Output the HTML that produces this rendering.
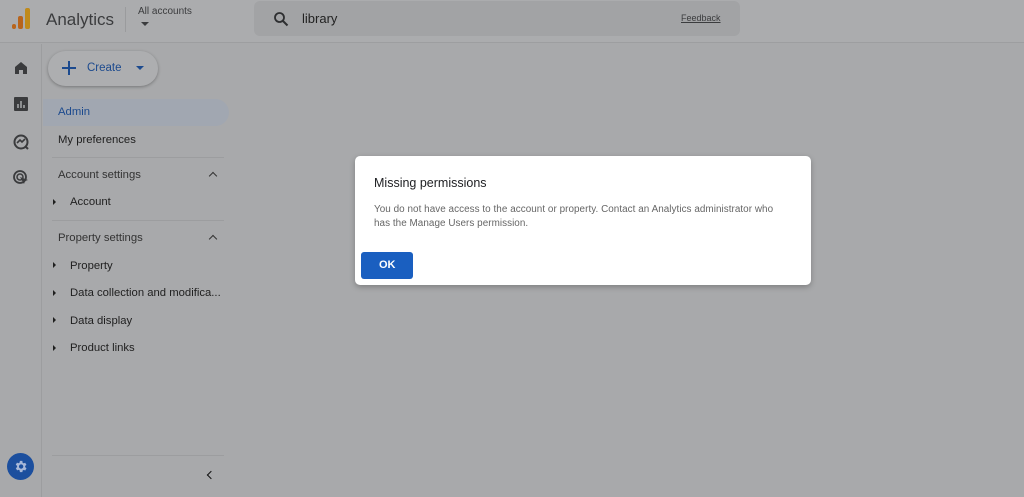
<!DOCTYPE html>
<html><head><meta charset="utf-8"><style>
*{margin:0;padding:0;box-sizing:border-box}
body{width:1024px;height:497px;overflow:hidden;background:#a8a9ab;font-family:"Liberation Sans",Arial,sans-serif;position:relative;color:#1f1f1f}
.hdr{position:absolute;left:0;top:0;width:1024px;height:43px;background:#abacae;border-bottom:1px solid #9d9ea0}
.rail{position:absolute;left:0;top:44px;width:42px;height:453px;border-right:1px solid #9c9d9f}
.t{position:absolute;white-space:nowrap}
.nav{font-size:11.3px;color:#1f1f1f}
.sec{font-size:11.3px;color:#333}
.tri{position:absolute;width:0;height:0;border-top:3px solid transparent;border-bottom:3px solid transparent;border-left:3px solid #1f1f1f}
.div{position:absolute;left:52px;width:172px;height:1px;background:#9c9d9f}
.car{position:absolute;width:6px;height:6px;border-left:1.6px solid #333;border-top:1.6px solid #333;transform:rotate(45deg)}
</style></head><body>
<div class="hdr"></div>
<div style="position:absolute;left:12px;top:24px;width:4px;height:5px;border-radius:2px;background:#b8641b"></div>
<div style="position:absolute;left:18px;top:16px;width:5px;height:13px;border-radius:2px;background:#b8641b"></div>
<div style="position:absolute;left:25px;top:8px;width:5px;height:21px;border-radius:2px;background:#c08a1a"></div>
<div class="t" style="left:46px;top:10px;font-size:17px;color:#3b3c3e">Analytics</div>
<div style="position:absolute;left:125px;top:7px;width:1px;height:25px;background:#9a9b9d"></div>
<div class="t" style="left:138px;top:6px;font-size:10px;color:#3b3c3e">All accounts</div>
<div style="position:absolute;left:141px;top:22px;border-left:4px solid transparent;border-right:4px solid transparent;border-top:4px solid #3b3c3e"></div>
<div style="position:absolute;left:254px;top:1px;width:486px;height:35px;border-radius:6px;background:#a2a3a5"></div>
<svg style="position:absolute;left:273px;top:11px" width="16" height="16" viewBox="0 0 16 16"><circle cx="6.5" cy="6.5" r="4.5" fill="none" stroke="#2e2f31" stroke-width="1.8"/><path d="M10 10l4.5 4.5" stroke="#2e2f31" stroke-width="2"/></svg>
<div class="t" style="left:302px;top:11px;font-size:13px;color:#222">library</div>
<div class="t" style="left:681px;top:13px;font-size:9px;color:#3b3c3e;text-decoration:underline">Feedback</div>
<div class="rail"></div>
<svg style="position:absolute;left:13px;top:60px" width="16" height="16" viewBox="0 0 16 16"><path d="M2 7L8 2l6 5v7h-4v-4H6v4H2z" fill="#3a3b3d"/></svg>
<svg style="position:absolute;left:14px;top:97px" width="14" height="14" viewBox="0 0 14 14"><rect width="14" height="14" rx="1" fill="#3a3b3d"/><path d="M4 11V7M7 11V4M10 11V8" stroke="#a8a9ab" stroke-width="1.5"/></svg>
<svg style="position:absolute;left:12px;top:133px" width="18" height="18" viewBox="0 0 18 18"><circle cx="9" cy="9" r="6.5" fill="none" stroke="#3a3b3d" stroke-width="2"/><path d="M5 10l3-3 2 2 3-3" fill="none" stroke="#3a3b3d" stroke-width="1.6"/><path d="M13 13l3 3" stroke="#3a3b3d" stroke-width="2"/></svg>
<svg style="position:absolute;left:12px;top:169px" width="18" height="18" viewBox="0 0 18 18"><circle cx="8" cy="8" r="6" fill="none" stroke="#3a3b3d" stroke-width="1.8"/><circle cx="8" cy="8" r="3" fill="none" stroke="#3a3b3d" stroke-width="1.5"/><path d="M8 8l8 3-3 1-1 3z" fill="#3a3b3d"/></svg>
<div style="position:absolute;left:48px;top:51px;width:110px;height:35px;border-radius:18px;background:#adaeb0;box-shadow:0 1px 3px rgba(0,0,0,.3)"></div>
<div style="position:absolute;left:62px;top:67px;width:14px;height:2px;background:#1c4a8e"></div>
<div style="position:absolute;left:68px;top:61px;width:2px;height:14px;background:#1c4a8e"></div>
<div class="t" style="left:87px;top:62px;font-size:11.5px;color:#1c4a8e">Create</div>
<div style="position:absolute;left:136px;top:66px;border-left:4px solid transparent;border-right:4px solid transparent;border-top:4px solid #1c4a8e"></div>
<div style="position:absolute;left:43px;top:99px;width:186px;height:27px;border-radius:0 14px 14px 0;background:#a1a7b1"></div>
<div class="t nav" style="left:58px;top:106px;color:#1c4a8e">Admin</div>
<div class="t nav" style="left:58px;top:134px">My preferences</div>
<div class="div" style="top:157px"></div>
<div class="t sec" style="left:58px;top:169px">Account settings</div>
<div class="car" style="left:210px;top:173px"></div>
<div class="tri" style="left:53px;top:199px"></div>
<div class="t nav" style="left:70px;top:196px">Account</div>
<div class="div" style="top:220px"></div>
<div class="t sec" style="left:58px;top:232px">Property settings</div>
<div class="car" style="left:210px;top:236px"></div>
<div class="tri" style="left:53px;top:262px"></div>
<div class="t nav" style="left:70px;top:260px">Property</div>
<div class="tri" style="left:53px;top:290px"></div>
<div class="t nav" style="left:70px;top:287px">Data collection and modifica...</div>
<div class="tri" style="left:53px;top:317px"></div>
<div class="t nav" style="left:70px;top:315px">Data display</div>
<div class="tri" style="left:53px;top:345px"></div>
<div class="t nav" style="left:70px;top:342px">Product links</div>
<div class="div" style="top:455px"></div>
<div class="car" style="left:208px;top:472px;transform:rotate(-45deg);border-color:#111"></div>
<div style="position:absolute;left:7px;top:453px;width:27px;height:27px;border-radius:50%;background:#1c4f9e"></div>
<svg style="position:absolute;left:13px;top:459px" width="15" height="15" viewBox="0 0 24 24"><path fill="#a8b8d8" d="M19.4 13a7.5 7.5 0 000-2l2.1-1.6-2-3.5-2.5 1a7 7 0 00-1.7-1L15 3h-4l-.4 2.7a7 7 0 00-1.7 1l-2.5-1-2 3.5L6.6 11a7.5 7.5 0 000 2l-2.1 1.6 2 3.5 2.5-1a7 7 0 001.7 1L11 21h4l.4-2.7a7 7 0 001.7-1l2.5 1 2-3.5zM13 15.5a3.5 3.5 0 110-7 3.5 3.5 0 010 7z"/></svg>
<div style="position:absolute;left:355px;top:156px;width:456px;height:129px;background:#fff;border-radius:5px;box-shadow:0 2px 6px rgba(0,0,0,.25)"></div>
<div class="t" style="left:374px;top:176px;font-size:12.5px;color:#202124">Missing permissions</div>
<div class="t" style="left:374px;top:203px;font-size:9.9px;color:#666;line-height:14px;letter-spacing:.05px">You do not have access to the account or property. Contact an Analytics administrator who<br>has the Manage Users permission.</div>
<div style="position:absolute;left:361px;top:252px;width:52px;height:27px;border-radius:3px;background:#1a5fc0"></div>
<div class="t" style="left:379px;top:259px;font-size:11px;color:#fff;font-weight:bold">OK</div>
</body></html>
